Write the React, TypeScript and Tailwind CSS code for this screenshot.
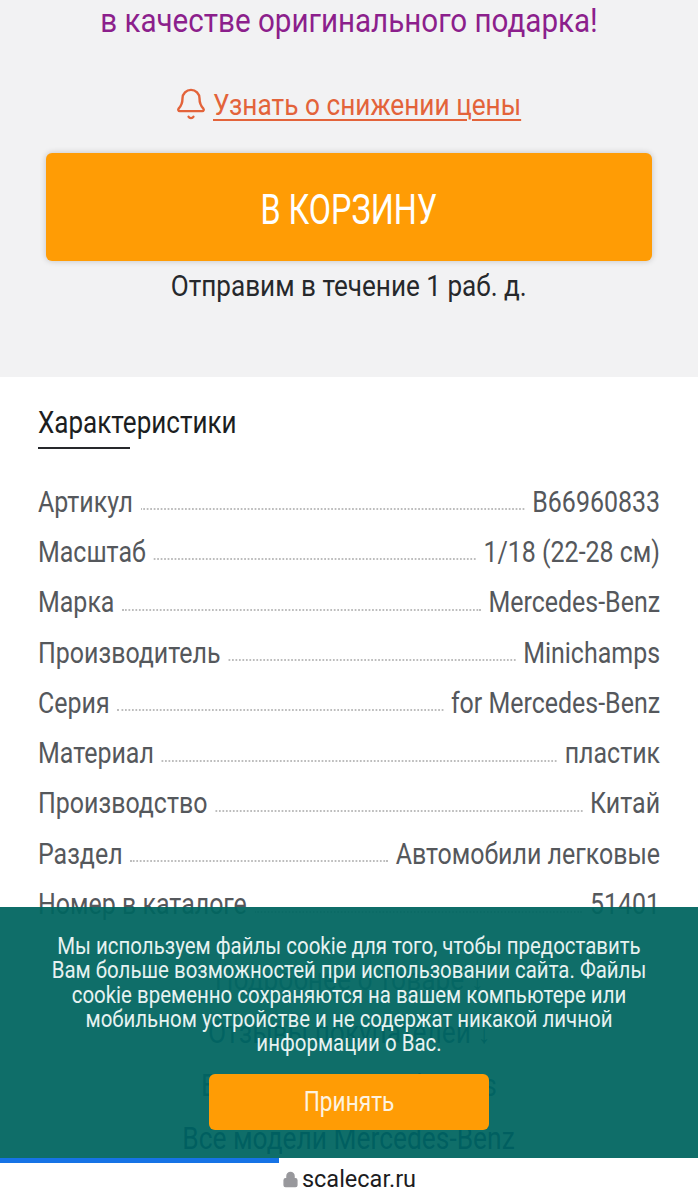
import { Bell, Lock } from 'lucide-react';

const specs = [
  { label: 'Артикул', value: 'B66960833' },
  { label: 'Масштаб', value: '1/18 (22-28 см)' },
  { label: 'Марка', value: 'Mercedes-Benz' },
  { label: 'Производитель', value: 'Minichamps' },
  { label: 'Серия', value: 'for Mercedes-Benz' },
  { label: 'Материал', value: 'пластик' },
  { label: 'Производство', value: 'Китай' },
  { label: 'Раздел', value: 'Автомобили легковые' },
  { label: 'Номер в каталоге', value: '51401' },
];

export default function App() {
  return (
    <div className="relative h-[1200px] w-[698px] overflow-hidden bg-white font-['Roboto',sans-serif]">
      <div className="flex h-[377px] flex-col items-center bg-[#f2f2f3]">
        <p className="h-[46px] shrink-0 scale-x-[0.87] whitespace-nowrap text-[34px] leading-[40px] text-[#8c1f8c]">в качестве оригинального подарка!</p>
        <a className="mt-[38px] flex h-[40px] items-center gap-[6px] pr-[3px] text-[#e3633a]">
          <Bell className="h-[34px] w-[34px] shrink-0" strokeWidth={1.7} />
          <span className="-mx-[23px] scale-x-[0.875] whitespace-nowrap text-[30px] underline decoration-2 underline-offset-4">Узнать о снижении цены</span>
        </a>
        <button className="mt-[29px] flex h-[108px] w-[606px] shrink-0 items-center justify-center rounded-md bg-[#ff9c05] pt-[4px] text-white shadow-[0_0_6px_rgba(0,0,0,0.2)]">
          <span className="scale-x-[0.77] text-[42px]">В КОРЗИНУ</span>
        </button>
        <p className="mt-[8px] scale-x-[0.9] whitespace-nowrap text-[29px] leading-[34px] text-[#26282b]">Отправим в течение 1 раб. д.</p>
      </div>

      <div className="px-[38px]">
        <h2 className="mt-[26px] origin-left scale-x-[0.84] whitespace-nowrap text-[31px] leading-[40px] text-[#1c1e21]">Характеристики</h2>
        <div className="mt-[4px] h-[2px] w-[92px] bg-[#26282b]" />
        <div className="mt-[28px] flex w-[715px] origin-left scale-x-[0.87] flex-col">
          {specs.map(spec => (
            <div key={spec.label} className="flex h-[50.3px] items-center text-[28.7px] text-[#55585c]">
              <span>{spec.label}</span>
              <span className="mx-[9px] mt-[14px] flex-1 border-b-2 border-dotted border-[#bdbdbd]" />
              <span>{spec.value}</span>
            </div>
          ))}
        </div>
        <div className="mt-[30px] flex flex-col items-center text-[31px] leading-[40px]">
          <p className="h-[53px] shrink-0 scale-x-[0.85] whitespace-nowrap text-[#5f7f98]">Подробнее о товаре ↓</p>
          <p className="h-[53px] shrink-0 scale-x-[0.85] whitespace-nowrap text-[#2f4f85]">Отзывы покупателей ↓</p>
          <p className="h-[53px] shrink-0 scale-x-[0.85] whitespace-nowrap text-[#2f4f85]">Все модели Minichamps</p>
          <p className="h-[53px] shrink-0 scale-x-[0.85] whitespace-nowrap text-[#000060]">Все модели Mercedes-Benz</p>
        </div>
      </div>

      {/* cookie banner over the page */}
      <div className="absolute left-0 top-[907px] flex h-[251px] w-full flex-col items-center bg-[#006560]/94 pt-[27px]">
        <p className="w-[712px] shrink-0 scale-x-[0.87] text-center text-[23.5px] leading-[24.3px] text-[#e6f2f1]">
          Мы используем файлы cookie для того, чтобы предоставить Вам больше возможностей при использовании сайта. Файлы cookie временно сохраняются на вашем компьютере или мобильном устройстве и не содержат никакой личной информации о Вас.
        </p>
        <button className="mt-[19px] h-[56px] w-[280px] shrink-0 rounded-md bg-[#ff9c05] text-[#fdf3e0]">
          <span className="inline-block scale-x-[0.84] text-[27px]">Принять</span>
        </button>
      </div>

      {/* browser address bar */}
      <div className="absolute bottom-0 left-0 flex h-[42px] w-full items-center justify-center gap-[3px] bg-white">
        <div className="absolute left-0 top-0 h-[5px] w-[279px] bg-[#1673e6]" />
        <Lock className="mt-[1px] h-[21px] w-[17px] fill-[#98989c] text-[#98989c]" />
        <span className="mt-[2px] text-[23.5px] text-[#1c1c1e]">scalecar.ru</span>
      </div>
    </div>
  );
}
